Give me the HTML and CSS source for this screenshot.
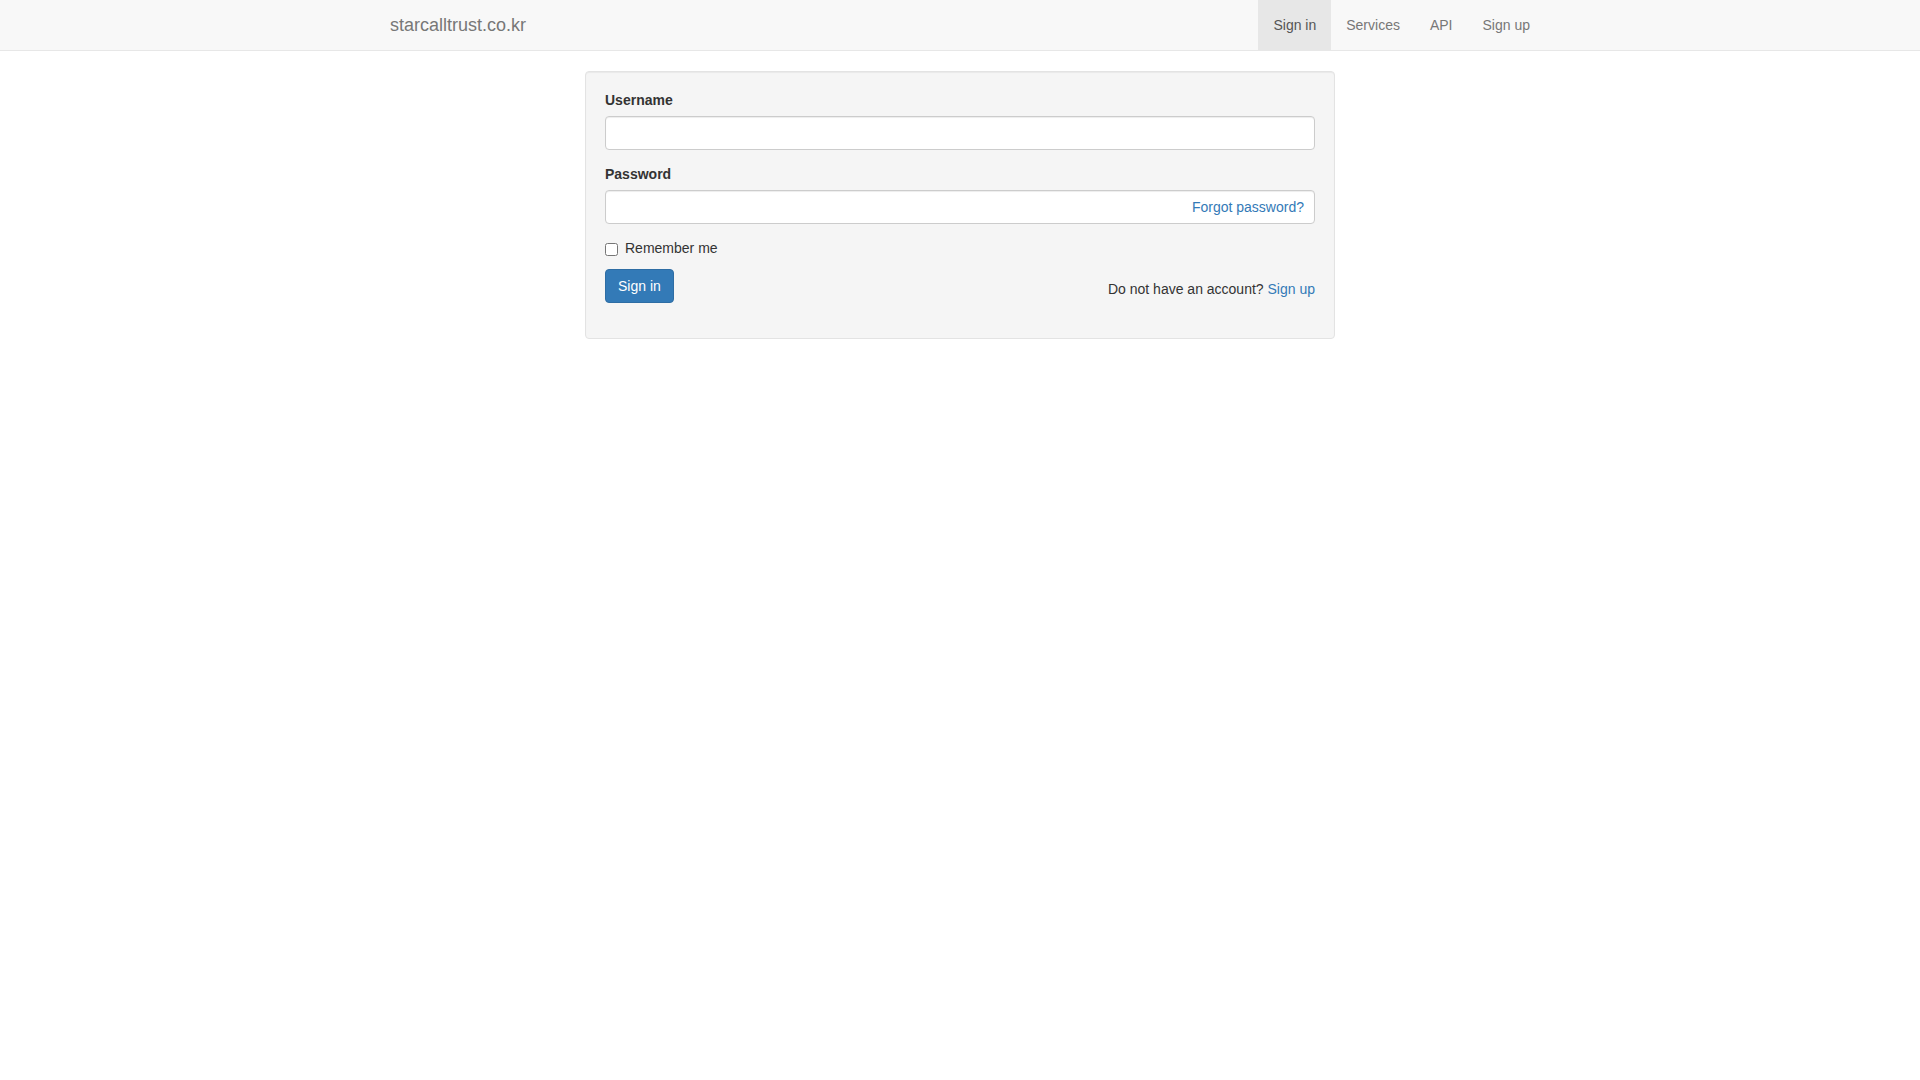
FILE: index.html
```html
<!DOCTYPE html>
<html lang="en">
<head>
    <meta charset="UTF-8">
    <meta name="viewport" content="width=device-width, initial-scale=1.0">
    <title>Sign in - starcalltrust.co.kr</title>
    <link rel="stylesheet" href="styles.css">
</head>
<body>
    <nav class="navbar">
        <div class="container navbar-inner">
            <a class="navbar-brand" href="#">starcalltrust.co.kr</a>
            <ul class="nav">
                <li class="active"><a href="#">Sign in</a></li>
                <li><a href="#">Services</a></li>
                <li><a href="#">API</a></li>
                <li><a href="#">Sign up</a></li>
            </ul>
        </div>
    </nav>
    <div class="well">
        <form>
            <div class="form-group">
                <label for="username">Username</label>
                <input type="text" id="username" class="form-control">
            </div>
            <div class="form-group">
                <label for="password">Password</label>
                <div class="input-wrap">
                    <input type="password" id="password" class="form-control">
                    <a class="forgot" href="#">Forgot password?</a>
                </div>
            </div>
            <div class="checkbox">
                <label><input type="checkbox"> Remember me</label>
            </div>
            <div class="form-group actions">
                <button type="submit" class="btn btn-primary">Sign in</button>
                <p class="signup-note">Do not have an account? <a href="#">Sign up</a></p>
            </div>
        </form>
    </div>
</body>
</html>
```

FILE: styles.css
```css
* {
    box-sizing: border-box;
}
body {
    margin: 0;
    font-family: "Liberation Sans", Arial, Helvetica, sans-serif;
    font-size: 14px;
    line-height: 1.42857;
    color: #333;
    background-color: #fff;
}
a {
    color: #337ab7;
    text-decoration: none;
}
.navbar {
    height: 51px;
    background-color: #f8f8f8;
    border-bottom: 1px solid #e7e7e7;
    margin-bottom: 20px;
}
.container {
    width: 1170px;
    margin: 0 auto;
    padding: 0 15px;
}
.navbar-inner {
    display: flex;
    justify-content: space-between;
}
.navbar-brand {
    margin-left: -15px;
    padding: 15px;
    height: 50px;
    font-size: 18px;
    line-height: 20px;
    color: #777;
}
.nav {
    display: flex;
    margin: 0 -15px 0 0;
    padding: 0;
    list-style: none;
}
.nav a {
    display: block;
    padding: 15px;
    line-height: 20px;
    color: #777;
}
.nav .active a {
    color: #555;
    background-color: #e7e7e7;
}
.well {
    width: 750px;
    margin: 0 auto 20px;
    padding: 19px 19px 20px;
    background-color: #f5f5f5;
    border: 1px solid #e3e3e3;
    border-radius: 4px;
    box-shadow: inset 0 1px 1px rgba(0,0,0,0.05);
}
form {
    display: flow-root;
}
.form-group {
    margin-bottom: 15px;
}
.form-group label {
    display: inline-block;
    margin-bottom: 5px;
    font-weight: bold;
}
.form-control {
    display: block;
    width: 100%;
    height: 34px;
    padding: 6px 12px;
    font: inherit;
    color: #555;
    background-color: #fff;
    border: 1px solid #ccc;
    border-radius: 4px;
    box-shadow: inset 0 1px 1px rgba(0,0,0,0.075);
}
.input-wrap {
    position: relative;
}
.forgot {
    position: absolute;
    right: 11px;
    top: 7px;
    line-height: 20px;
}
.checkbox {
    margin: 10px 0;
    min-height: 20px;
}
.checkbox label {
    display: block;
    padding-left: 20px;
    position: relative;
    cursor: pointer;
}
.checkbox input {
    position: absolute;
    left: 0;
    top: 0;
    margin: 4px 0 0;
    width: 13px;
    height: 13px;
}
.actions {
    display: flex;
    justify-content: space-between;
    align-items: flex-start;
}
.btn {
    display: inline-block;
    padding: 6px 12px;
    font: inherit;
    line-height: 20px;
    border: 1px solid transparent;
    border-radius: 4px;
    cursor: pointer;
}
.btn-primary {
    color: #fff;
    background-color: #337ab7;
    border-color: #2e6da4;
}
.signup-note {
    margin: 11px 0 0;
}
```
